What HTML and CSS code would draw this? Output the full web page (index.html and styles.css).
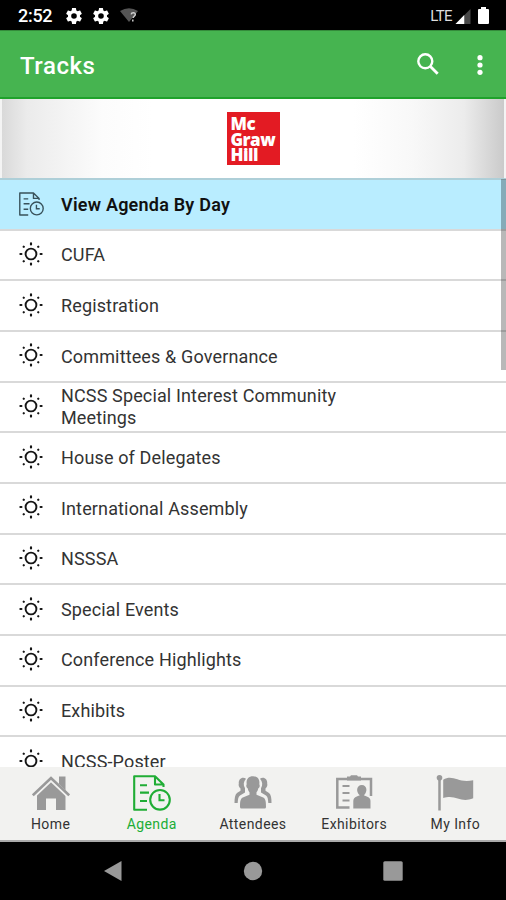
FILE: index.html
```html
<!DOCTYPE html>
<html lang="en">
<head>
<meta charset="utf-8">
<title>Tracks</title>
<link rel="stylesheet" href="styles.css">
</head>
<body>
<svg class="defs" aria-hidden="true">
  <symbol id="sun" viewBox="0 0 24 24">
    <circle cx="12" cy="12" r="5.4" fill="none" stroke="currentColor" stroke-width="1.9"/>
    <path d="M12 1.400v1M12 21.600v1M1.400 12h1M21.600 12h1M4.700 4.700l.1.1M19.200 19.200l.1.1M4.700 19.300l.1-.1M19.200 4.800l.1-.1" fill="none" stroke="currentColor" stroke-width="2.200" stroke-linecap="round"/>
  </symbol>
  <symbol id="agenda" viewBox="0 0 38 36">
    <path d="M14 34.7H1.2V1.2H22L30.5 9.5V12M22 1.2V9.5H30.5M7 10.2h7M7 17.6h9M7 26h7" fill="none" stroke="currentColor" stroke-width="2.1" stroke-linejoin="round"/>
    <circle cx="27" cy="24.8" r="9.8" fill="none" stroke="currentColor" stroke-width="2.1"/>
    <path d="M26.5 19v6.2h5" fill="none" stroke="currentColor" stroke-width="2.1"/>
  </symbol>
  <symbol id="gear" viewBox="2 2 20 20">
    <path fill="currentColor" d="M19.43 12.98c.04-.32.07-.64.07-.98s-.03-.66-.07-.98l2.11-1.65c.19-.15.24-.42.12-.64l-2-3.46c-.12-.22-.39-.3-.61-.22l-2.49 1c-.52-.4-1.08-.73-1.69-.98l-.38-2.65A.49.49 0 0 0 14 2h-4c-.25 0-.46.18-.49.42l-.38 2.65c-.61.25-1.17.59-1.69.98l-2.49-1c-.23-.09-.49 0-.61.22l-2 3.46c-.13.22-.07.49.12.64l2.11 1.65c-.04.32-.07.65-.07.98s.03.66.07.98l-2.11 1.65c-.19.15-.24.42-.12.64l2 3.46c.12.22.39.3.61.22l2.49-1c.52.4 1.08.73 1.69.98l.38 2.65c.03.24.24.42.49.42h4c.25 0 .46-.18.49-.42l.38-2.65c.61-.25 1.17-.59 1.69-.98l2.49 1c.23.09.49 0 .61-.22l2-3.46c.12-.22.07-.49-.12-.64zM12 15.5a3.5 3.5 0 1 1 0-7 3.5 3.5 0 0 1 0 7z"/>
  </symbol>
</svg>
<div class="screen">
  <header class="status">
    <span class="time">2:52</span>
    <svg class="gear"><use href="#gear"/></svg>
    <svg class="gear"><use href="#gear"/></svg>
    <svg class="wifi" viewBox="0 0 18 15"><path d="M0 3Q9-2.5 18 3L9 14Z" fill="#555"/><path d="M11.2 6.4c.3-2.4 4.4-2.2 4.1.2-.2 1.6-2 1.8-2.2 3.4M12.8 11.5v2" fill="none" stroke="#ccc" stroke-width="1.5"/></svg>
    <span class="lte">LTE</span>
    <svg class="signal" viewBox="0 0 16 16"><path d="M0 16L16 0v16z" fill="#484848"/><path d="M0 16L9.3 6.3V16z" fill="#fff"/></svg>
    <svg class="battery" viewBox="0 0 11 17"><path d="M3 0h5v2h2q1 0 1 1v13q0 1-1 1H1q-1 0-1-1V3q0-1 1-1h2z" fill="#fff"/></svg>
  </header>
  <div class="appbar">
    <h1>Tracks</h1>
    <svg class="search" viewBox="0 0 22 22"><circle cx="8.3" cy="8.3" r="7" fill="none" stroke="#fff" stroke-width="2.4"/><path d="M13.2 13.2l7.5 7.5" stroke="#fff" stroke-width="2.8"/></svg>
    <svg class="more" viewBox="0 0 6 20"><g fill="#fff"><circle cx="3" cy="2.7" r="2.6"/><circle cx="3" cy="10" r="2.6"/><circle cx="3" cy="17.3" r="2.6"/></g></svg>
  </div>
  <div class="banner">
    <div class="logo">Mc<br>Graw<br>Hill</div>
  </div>
  <main class="list">
    <div class="row day"><svg class="doc"><use href="#agenda"/></svg><span>View Agenda By Day</span></div>
    <div class="row"><svg class="sun"><use href="#sun"/></svg><span>CUFA</span></div>
    <div class="row"><svg class="sun"><use href="#sun"/></svg><span>Registration</span></div>
    <div class="row"><svg class="sun"><use href="#sun"/></svg><span>Committees &amp; Governance</span></div>
    <div class="row"><svg class="sun"><use href="#sun"/></svg><span>NCSS Special Interest Community Meetings</span></div>
    <div class="row"><svg class="sun"><use href="#sun"/></svg><span>House of Delegates</span></div>
    <div class="row"><svg class="sun"><use href="#sun"/></svg><span>International Assembly</span></div>
    <div class="row"><svg class="sun"><use href="#sun"/></svg><span>NSSSA</span></div>
    <div class="row"><svg class="sun"><use href="#sun"/></svg><span>Special Events</span></div>
    <div class="row"><svg class="sun"><use href="#sun"/></svg><span>Conference Highlights</span></div>
    <div class="row"><svg class="sun"><use href="#sun"/></svg><span>Exhibits</span></div>
    <div class="row"><svg class="sun"><use href="#sun"/></svg><span>NCSS-Poster</span></div>
    <div class="scrollbar"></div>
  </main>
  <nav class="tabs">
    <div class="tab"><svg viewBox="0 0 38 36"><path d="M27 1.500h6.500v14L27 9z" fill="currentColor"/><path d="M19 6L33.500 19.500V35H24V23.500H14V35H5V19.500Z" fill="currentColor"/><path d="M1 21.500L19 4.500 37 21.500" fill="none" stroke="#f2f2f0" stroke-width="4.200"/><path d="M.8 20.300L19 3 37.200 20.300" fill="none" stroke="currentColor" stroke-width="2.700"/></svg><span>Home</span></div>
    <div class="tab active"><svg viewBox="0 0 38 36"><use href="#agenda"/></svg><span>Agenda</span></div>
    <div class="tab"><svg viewBox="0 0 38 36">
      <path id="side" d="M12 3.800C8.500 1.200 4.300 4 4.800 8.500c-.6 2 .3 3.700 1.700 5v2.200L3 18C1 19.500.5 23 .5 28h3.200c.2-3.500.4-6 2.300-7.600l5-3v-4.200C9 10 9.500 6.500 12 3.800z" fill="currentColor"/>
      <use href="#side" transform="matrix(-1 0 0 1 38 0)"/>
      <path d="M19 1.200c-5 0-7 3.600-6.300 8-1 1.800 0 3.600 1.100 4.400.3 1.800.9 2.700 1.700 3.700v2.400l-6.700 2.800C6.300 23.700 6 27 6 32q0 1.500 1.500 1.500h23q1.500 0 1.500-1.500c0-5-.3-8.300-2.800-9.500l-6.700-2.800v-2.400c.8-1 1.400-1.900 1.700-3.700 1.100-.8 2.100-2.600 1.100-4.400.7-4.400-1.300-8-6.300-8z" fill="currentColor"/></svg><span>Attendees</span></div>
    <div class="tab"><svg viewBox="0 0 38 36"><path d="M14.500 32.500H2.300V4H36V21" fill="none" stroke="currentColor" stroke-width="2.500"/><path d="M12 1.500h3L16 .2h6l1 1.300h3v4H12zM18.300 33.500v-7.500q0-3.500 3.500-4.500l3-1.200c-4-3.200-3.500-10.300 2-10.300s6 7.100 2 10.300l3 1.200q3.700 1 3.700 4.500v7.500z" fill="currentColor"/><path d="M7.500 11h7M7.500 18h7M7.500 25.500h7" stroke="currentColor" stroke-width="2.200"/></svg><span>Exhibitors</span></div>
    <div class="tab"><svg viewBox="0 0 38 36"><circle cx="3.500" cy="2.800" r="2.800" fill="currentColor"/><path d="M3.500 3v32.500" stroke="currentColor" stroke-width="2.500"/><path d="M7.200 4.800c10-6 15 4 30 .4v18c-13 5.500-17-4.500-30-.2z" fill="currentColor"/></svg><span>My Info</span></div>
  </nav>
  <footer class="system">
    <svg viewBox="0 0 20 20"><path d="M1 10L18.500 0v20z" fill="currentColor"/></svg>
    <svg viewBox="0 0 20 20"><circle cx="10" cy="10" r="9.200" fill="currentColor"/></svg>
    <svg viewBox="0 0 20 20"><rect x=".3" y=".3" width="19.400" height="19.400" rx="1.500" fill="currentColor"/></svg>
  </footer>
</div>
</body>
</html>
```
FILE: styles.css
```css
* { box-sizing: border-box; }
body { margin: 0; font-family: Roboto, "Liberation Sans", sans-serif; background: #000; }
svg { display: block; flex: none; }
.defs { display: none; }
.screen { width: 506px; height: 900px; display: flex; flex-direction: column; overflow: hidden; }
.status { height: 30px; flex: none; background: #000; color: #fff; display: flex; align-items: center; padding: 1px 17px 0 18px; }
.time { width: 48px; font-size: 18px; font-weight: 500; line-height: 28px; letter-spacing: -.3px; }
.gear { width: 16px; height: 16px; margin-right: 11px; }
.wifi { width: 18px; height: 15px; }
.lte { margin-left: auto; font-size: 15px; letter-spacing: -.6px; color: #ddd; }
.signal { width: 16px; height: 15px; margin: 1px 7px 0 3px; }
.battery { width: 11px; height: 17px; }
.appbar { height: 69px; flex: none; background: #46b450; border-top: 1px solid #348b3b; border-bottom: 2px solid #1fa22b; color: #fff; display: flex; align-items: center; padding: 1px 23px 0 20px; }
h1 { margin: 3px auto 0 0; font-size: 24px; font-weight: 500; line-height: 30px; letter-spacing: .55px; }
.search { width: 22px; height: 22px; margin-right: 38px; margin-bottom: 1px; }
.more { width: 6px; height: 20px; }
.banner { height: 79px; flex: none; display: flex; justify-content: center; padding-top: 13px; border: solid #f4f4f4; border-width: 0 2px; background: linear-gradient(90deg, #d9d9d9 0, #ebebeb 5%, #f2f2f2 11%, #fcfcfc 20%, #fff 30%, #fff 70%, #f8f8f8 82%, #ececec 92%, #cacaca 100%); }
.logo { width: 53px; height: 53px; background: #e31b23; color: #fff; padding: 4px 0 0 4px; font: 800 17px/15.500px "Open Sans", sans-serif; letter-spacing: -.5px; }
.list { flex: 1; min-height: 0; overflow: hidden; position: relative; background: #fff; }
.row { height: 50.660px; display: flex; align-items: center; padding: 0 150px 0 18px; border-top: 2px solid #d9d9d9; color: #333; font-size: 18px; line-height: 21.500px; letter-spacing: .14px; }
.day { background: #b9edff; border-top-color: #aecfd8; color: #111; font-weight: 600; letter-spacing: .22px; }
.sun { width: 24px; height: 24px; margin: -2px 18px 0 1px; color: #151515; }
.doc { width: 25px; height: 24px; margin: 0 17px 0 1px; color: #38515a; }
.scrollbar { position: absolute; top: 1px; right: 0; width: 5px; height: 191px; background: rgba(0, 0, 0, .28); }
.tabs { height: 75px; flex: none; background: #f2f2f0; border-bottom: 2px solid #aaa; display: grid; grid-template-columns: repeat(5, 1fr); padding-top: 8px; }
.tab { display: flex; flex-direction: column; align-items: center; color: #999; }
.tab svg { width: 38px; height: 36px; }
.tab span { color: #333; font-size: 14px; line-height: 18px; margin-top: 4px; letter-spacing: .42px; }
.tab.active, .tab.active span { color: #20ad35; }
.system { height: 58px; flex: none; background: #000; color: #999; display: flex; justify-content: center; gap: 120px; padding-top: 19px; }
.system svg { width: 20px; height: 20px; }
```
